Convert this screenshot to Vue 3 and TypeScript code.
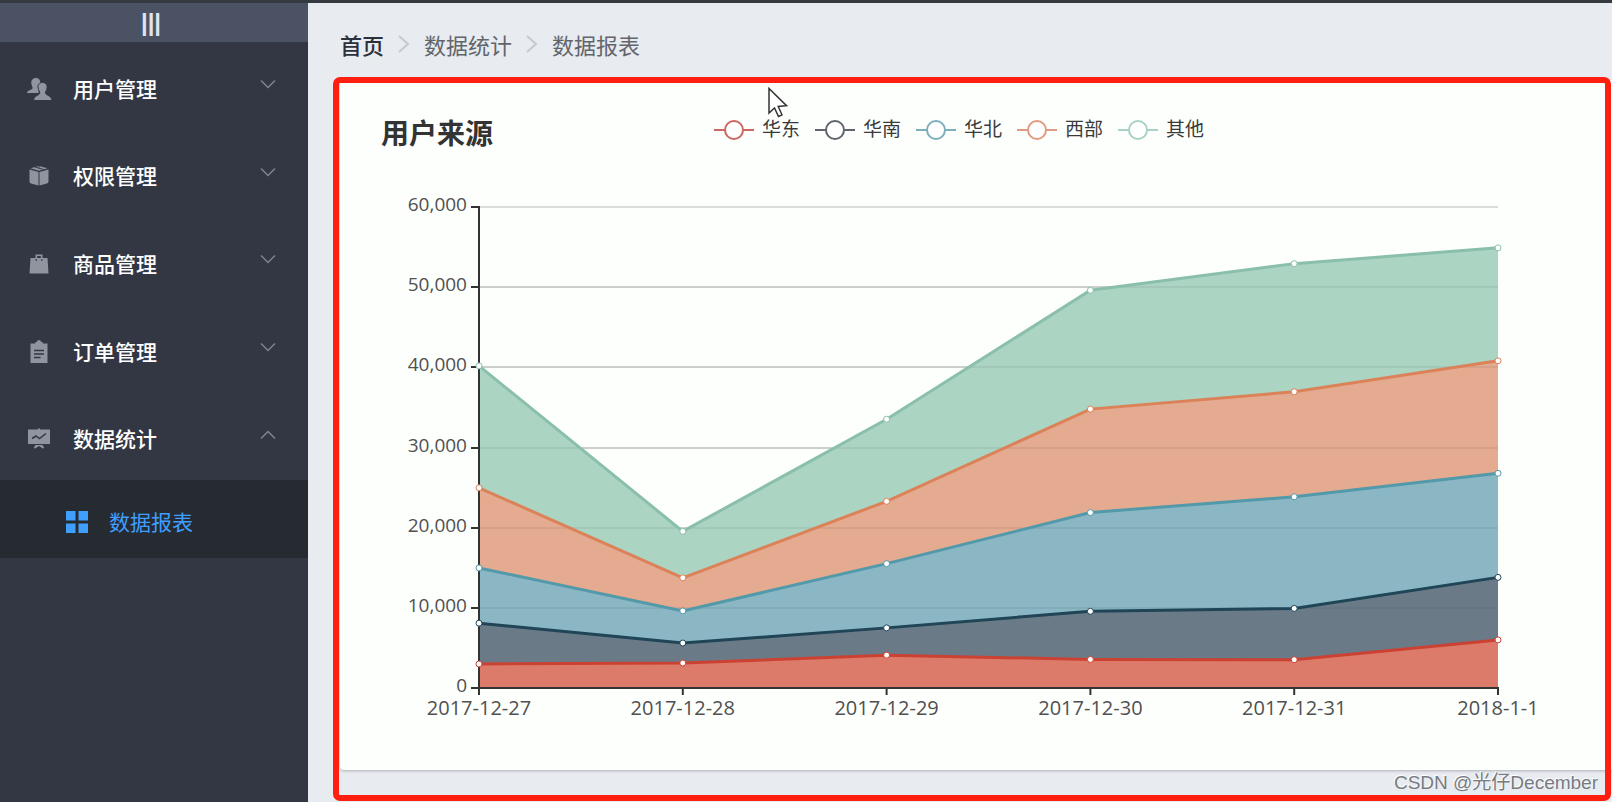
<script setup lang="ts">
interface MenuItem {
  id: string
  label: string
  open: boolean
}

interface Series {
  name: string
  legend: string
  line: string
  fill: string
  data: number[]
}

const menu: MenuItem[] = [
  { id: 'users', label: '用户管理', open: false },
  { id: 'rights', label: '权限管理', open: false },
  { id: 'goods', label: '商品管理', open: false },
  { id: 'orders', label: '订单管理', open: false },
  { id: 'reports', label: '数据统计', open: true },
]

const dates = ['2017-12-27', '2017-12-28', '2017-12-29', '2017-12-30', '2017-12-31', '2018-1-1']

const series: Series[] = [
  { name: '华东', legend: '#cc6762', line: '#cb4233', fill: '#dc7b6a', data: [2999, 3111, 4100, 3565, 3528, 6000] },
  { name: '华南', legend: '#5f656d', line: '#1f4557', fill: '#6b7a87', data: [5090, 2500, 3400, 6000, 6400, 7800] },
  { name: '华北', legend: '#7fafbb', line: '#5299aa', fill: '#8bb6c4', data: [6888, 4000, 8010, 12321, 13928, 12984] },
  { name: '西部', legend: '#e09c82', line: '#dc8259', fill: '#e4ab90', data: [9991, 4130, 7777, 12903, 13098, 14028] },
  { name: '其他', legend: '#a9d2c6', line: '#8abfab', fill: '#acd4c3', data: [15212, 5800, 10241, 14821, 15982, 14091] },
]

const left = 139
const right = 1158
const bottom = 534
const height = 481
const max = 60000

const xAt = (i: number): number => left + ((right - left) * i) / (dates.length - 1)
const yAt = (v: number): number => bottom - (height * v) / max

const ticks = [0, 10000, 20000, 30000, 40000, 50000, 60000].map((value) => ({
  label: value.toLocaleString('en-US'),
  y: Math.round(yAt(value)),
}))

const totals = dates.map(() => 0)
const layers = series.map((s) => {
  const base = totals.map((v, i) => `${xAt(i)},${yAt(v)}`).reverse()
  s.data.forEach((v, i) => (totals[i] += v))
  const points = totals.map((v, i) => ({ x: xAt(i), y: yAt(v) }))
  const top = points.map((p) => `${p.x},${p.y}`)
  return { ...s, points, top: top.join(' '), area: [...top, ...base].join(' ') }
})
</script>

<template>
  <div class="app">
    <aside class="sidebar">
      <button class="toggle" type="button" aria-label="折叠菜单">|||</button>
      <nav class="menu">
        <button v-for="item in menu" :key="item.id" class="menu-item" type="button" :aria-expanded="item.open">
          <svg class="icon" viewBox="0 0 26 26" aria-hidden="true">
            <g v-if="item.id === 'users'">
              <path d="M10 2c3 0 4.300 2 4.300 5 0 2.500-1.700 4-1.700 5.500V17H1c.2-3 4.800-3 5.500-4.500.5-1.500-.8-2.500-1.200-5C4.900 4.500 6.500 2 10 2z" />
              <path class="person" d="M16.500 6.500c3.500 0 5 2.500 4.600 5.500-.4 2.500-1.800 3.500-1.600 5 .3 2.600 6.200 2.300 6.500 7.500H7.500c.3-5.200 6-4.900 6.300-7.500.1-1.500-1.300-2.500-1.700-5-.5-3 .9-5.500 4.400-5.500z" />
            </g>
            <g v-else-if="item.id === 'rights'">
              <path d="M13 3l8.500 2.300-8.500 2.500-8.500-2.500z" />
              <path d="M3.500 6.500l9 2.500V22.500L5 20.500q-1.500-.5-1.500-2zM22.500 6.500l-9 2.500V22.500l7.500-2q1.500-.5 1.500-2z" />
              <path class="cut thin" d="M9 4l8.500 2.500M13 3v1.500" />
            </g>
            <g v-else-if="item.id === 'goods'">
              <path fill-rule="evenodd" d="M9.500 7V3.500h7V7h5l1 15.500h-19L4.500 7zm1.700 0h3.600V5h-3.600zm-1.700 1.300v1.500H11V8.300zm5.500 0v1.500h1.500V8.300z" />
            </g>
            <g v-else-if="item.id === 'orders'">
              <path d="M4.500 4.500h4.800V3h1.500q.4-2 2.200-2t2.200 2h1.500v1.500h4.800V24h-17z" />
              <path class="cut" d="M8 11.500h10M8 15h10M8 18.500h6.500" />
            </g>
            <g v-else>
              <path d="M2 3.500h9.500L13 2l1.500 1.500H24V18H2zM9.500 19h7l1.800 3-1.500.5-3.800-2.500-3.800 2.500-1.500-.5z" />
              <path class="cut" d="M6 12.500l4-2.500 3.500 2.500L20 7.500" />
            </g>
          </svg>
          <span class="label">{{ item.label }}</span>
          <svg class="chevron" viewBox="0 0 16 10" aria-hidden="true">
            <path :d="item.open ? 'M1 8.500L8 1.500l7 7' : 'M1 1.500l7 7 7-7'" />
          </svg>
        </button>
      </nav>
      <a class="submenu" href="#reports">
        <svg class="icon" viewBox="0 0 22 22" aria-hidden="true">
          <path d="M0 0h9.500v9.500H0zM12.500 0H22v9.500h-9.500zM0 12.500h9.500V22H0zM12.500 12.500H22V22h-9.500z" />
        </svg>
        <span class="label">数据报表</span>
      </a>
    </aside>

    <main class="content">
      <nav class="breadcrumb" aria-label="breadcrumb">
        <a class="home" href="#home">首页</a>
        <svg viewBox="0 0 40 18" aria-hidden="true"><path d="M15 1l9 8-9 8" /></svg>
        <span>数据统计</span>
        <svg viewBox="0 0 40 18" aria-hidden="true"><path d="M15 1l9 8-9 8" /></svg>
        <span>数据报表</span>
      </nav>

      <section class="card">
        <header class="card-head">
          <h1>用户来源</h1>
          <ul class="legend">
            <li v-for="s in series" :key="s.name">
              <svg viewBox="0 0 40 26" aria-hidden="true" :stroke="s.legend">
                <path d="M0 15h40" />
                <circle cx="20" cy="15" r="9" />
              </svg>
              <span>{{ s.name }}</span>
            </li>
          </ul>
        </header>

        <svg class="chart" viewBox="0 0 1272 616" role="img" aria-label="用户来源">
          <path v-for="t in ticks.slice(1)" :key="t.label" class="grid" :d="`M${left} ${t.y}H${right}`" />
          <polygon v-for="l in layers" :key="l.name" :points="l.area" :fill="l.fill" />
          <path v-for="t in ticks.slice(1, 6)" :key="t.label" class="grid-over" :d="`M${left} ${t.y}H${right}`" />
          <path class="axis" :d="`M${left} 52V${bottom}H${right + 1}`" />
          <g v-for="t in ticks" :key="t.label">
            <path class="axis" :d="`M${left - 8} ${t.y}h8`" />
            <text class="y-label" :x="left - 12" :y="t.y + 4">{{ t.label }}</text>
          </g>
          <g v-for="(d, i) in dates" :key="d">
            <path class="axis" :d="`M${xAt(i)} ${bottom}v7`" />
            <text class="x-label" :x="xAt(i)" y="561">{{ d }}</text>
          </g>
          <g v-for="l in layers" :key="l.name" :stroke="l.line">
            <polyline class="line" :points="l.top" />
            <circle v-for="p in l.points" :key="p.x" class="dot" :cx="p.x" :cy="p.y" r="3" />
          </g>
        </svg>
      </section>

      <div class="frame"></div>
      <svg class="cursor" viewBox="0 0 20 31" aria-hidden="true">
        <path d="M1 1.500V26l5.500-5 4 8.500 3.500-1.700-3.800-8.300 8.300-.8z" />
      </svg>
      <p class="watermark">CSDN @光仔December</p>
    </main>
  </div>
</template>

<style>
body {
  margin: 0;
}
</style>

<style scoped>
* {
  box-sizing: border-box;
}

.app {
  display: flex;
  min-height: 100vh;
  border-top: 3px solid #353940;
  background: #e8ebf0;
  font-family: 'Open Sans', 'Noto Sans CJK SC', sans-serif;
}

button {
  border: 0;
  padding: 0;
  background: none;
  font: inherit;
  cursor: pointer;
}

a {
  text-decoration: none;
}

.sidebar {
  flex: 0 0 308px;
  background: #323743;
}

.toggle {
  display: block;
  width: 100%;
  height: 39px;
  padding-right: 6px;
  background: #4a5264;
  color: #dfe4ef;
  font-family: 'Liberation Sans', sans-serif;
  font-size: 24px;
  font-weight: 700;
  line-height: 39px;
}

.menu {
  display: grid;
  grid-auto-rows: 1fr;
  height: 438px;
}

.menu-item {
  display: flex;
  align-items: center;
  padding: 6px 32px 0 26px;
  color: #fff;
  font-size: 21px;
  font-weight: 500;
  text-align: left;
}

.menu-item .icon {
  width: 26px;
  height: 26px;
  margin-right: 21px;
  fill: #8f949e;
}

.cut {
  fill: none;
  stroke: #323743;
  stroke-width: 1.5;
}

.thin {
  stroke-width: 1;
}

.person {
  stroke: #323743;
  stroke-width: 1;
}

.label {
  flex: 1;
  padding-bottom: 2px;
}

.chevron {
  width: 16px;
  height: 10px;
  margin-bottom: 9px;
  fill: none;
  stroke: #7f858f;
  stroke-width: 1.5;
}

.submenu {
  display: flex;
  align-items: center;
  gap: 21px;
  height: 78px;
  padding: 6px 20px 0 66px;
  background: #262b31;
  color: #409eff;
  font-size: 21px;
}

.submenu .icon {
  width: 22px;
  height: 22px;
  fill: #409eff;
}

.content {
  position: relative;
  flex: 1;
  min-width: 0;
  padding-left: 32px;
}

.breadcrumb {
  display: flex;
  align-items: center;
  height: 77px;
  padding-top: 5px;
  color: #62666c;
  font-size: 22px;
}

.breadcrumb svg {
  width: 40px;
  height: 18px;
  fill: none;
  stroke: #c5c9d0;
  stroke-width: 2;
}

.home {
  color: #2b303a;
  font-weight: 500;
}

.card {
  border-radius: 4px 0 0 4px;
  background: #fdfffd;
  box-shadow: 0 1px 3px rgba(0, 0, 0, 0.25);
}

.card-head {
  display: grid;
  grid-template-columns: 1fr auto 1fr;
  padding: 32px 75px 0 41px;
}

h1 {
  margin: 0;
  color: #333;
  font-size: 28px;
  line-height: 42px;
}

.legend {
  display: flex;
  gap: 15px;
  margin: 0;
  padding: 0;
  list-style: none;
}

.legend li {
  display: flex;
  align-items: center;
  gap: 8px;
  height: 32px;
  color: #3a3a3a;
  font-size: 19px;
}

.legend svg {
  width: 40px;
  height: 26px;
  stroke-width: 2;
}

.legend circle {
  fill: #fff;
}

.chart {
  display: block;
  width: 100%;
}

.grid {
  stroke: #d9dddb;
  stroke-width: 2;
}

.grid-over {
  stroke: rgba(40, 60, 60, 0.08);
  stroke-width: 2;
}

.axis {
  fill: none;
  stroke: #333;
  stroke-width: 2;
}

.y-label,
.x-label {
  fill: #505050;
  font-size: 19px;
}

.y-label {
  text-anchor: end;
}

.x-label {
  font-size: 20px;
  text-anchor: middle;
}

.line {
  fill: none;
  stroke-width: 3;
}

.dot {
  fill: #fff;
  stroke-width: 1;
}

.frame {
  position: absolute;
  inset: 74px 1px 1px 25px;
  border: 6px solid #ff1f10;
  border-radius: 7px;
  pointer-events: none;
}

.cursor {
  position: absolute;
  top: 84px;
  left: 460px;
  width: 20px;
  height: 31px;
  fill: #fff;
  stroke: #333;
  stroke-width: 1.5;
}

.watermark {
  position: absolute;
  right: 14px;
  bottom: 6px;
  margin: 0;
  color: #777b80;
  font-family: 'Liberation Sans', 'Noto Sans CJK SC', sans-serif;
  font-size: 19px;
  line-height: 26px;
  text-shadow: -1px -1px 0 #fff;
}
</style>
